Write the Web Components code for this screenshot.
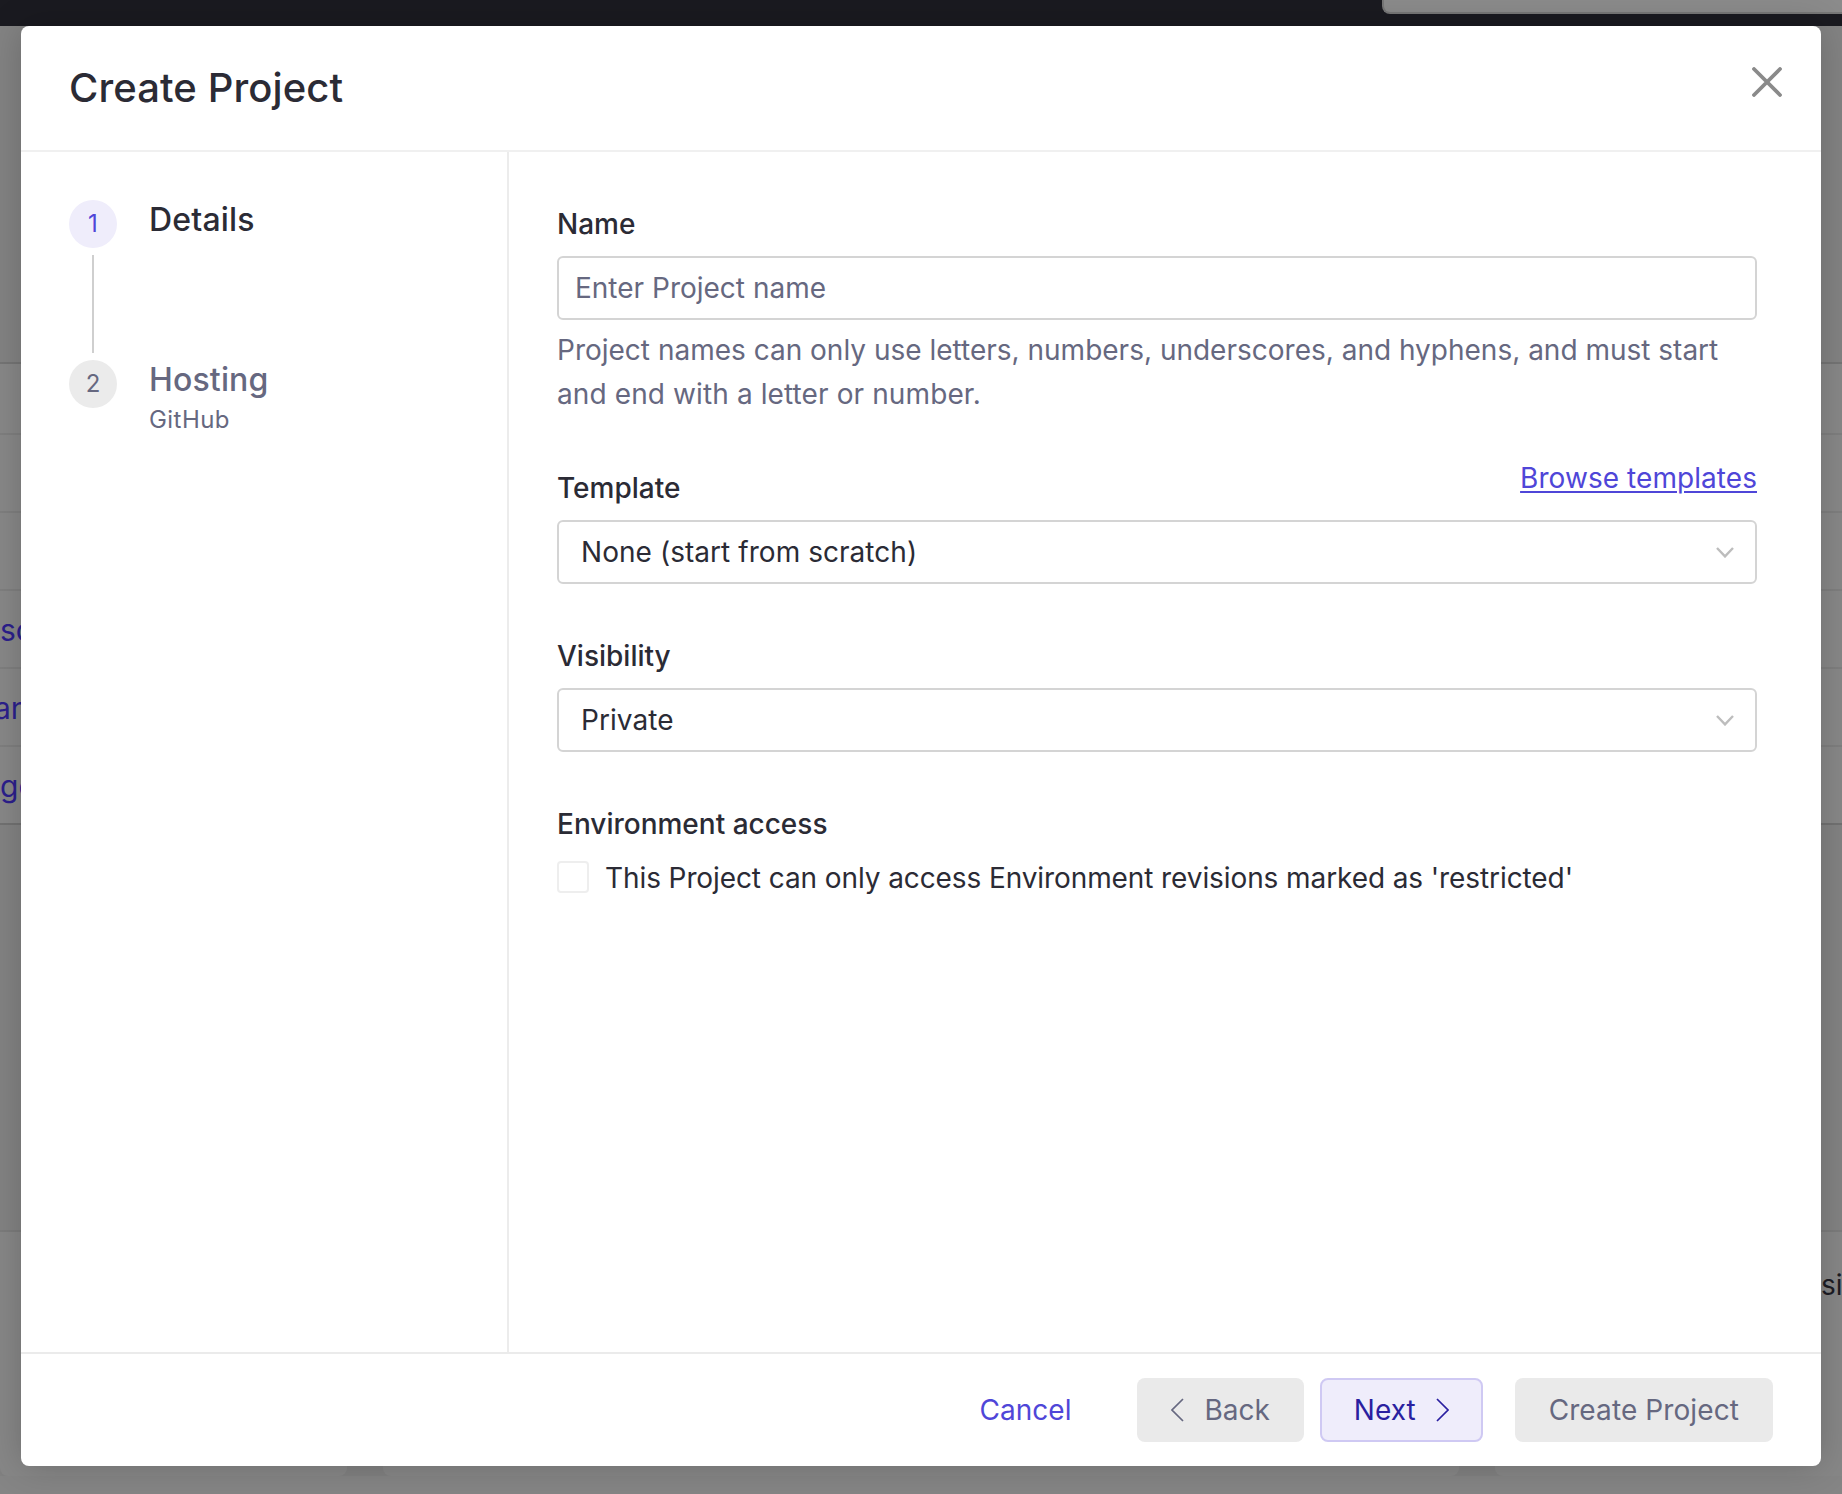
<!DOCTYPE html>
<html lang="en">
<head>
<meta charset="utf-8">
<title>Create Project</title>
<style>
  html, body { margin: 0; padding: 0; background: #878787; }
  body { font-family: Inter, "Liberation Sans", sans-serif; color: #2b2b35; }
  .tail { letter-spacing: .11px; }
</style>
</head>
<body>
<app-shell>
  <page-backdrop slot="page"></page-backdrop>
  <project-modal slot="modal" heading="Create Project">
    <step-list slot="steps">
      <step-item num="1" label="Details" state="active" connector></step-item>
      <step-item num="2" label="Hosting" sub="GitHub"></step-item>
    </step-list>

    <form-field label="Name">
      <text-box placeholder="Enter Project name"></text-box>
      <help-text>Project names can only use letters, numbers, underscores, and hyphens, and must start <span class="tail">and end with a letter or number.</span></help-text>
    </form-field>
    <form-field label="Template" action="Browse templates">
      <select-box value="None (start from scratch)"></select-box>
    </form-field>
    <form-field label="Visibility">
      <select-box value="Private"></select-box>
    </form-field>
    <form-field label="Environment access">
      <check-row>This Project can only access Environment revisions marked as 'restricted'</check-row>
    </form-field>

    <ui-button slot="footer" kind="link">Cancel</ui-button>
    <ui-button slot="footer" kind="muted" icon="left">Back</ui-button>
    <ui-button slot="footer" kind="primary" icon="right">Next</ui-button>
    <ui-button slot="footer" kind="muted" class="create">Create Project</ui-button>
  </project-modal>
</app-shell>

<script>
function define(name, css, html, extra) {
  const K = class extends HTMLElement {
    constructor() {
      super();
      const root = this.attachShadow({ mode: 'open' });
      const a = n => this.getAttribute(n) || '';
      root.innerHTML = '<style>' + css + '</style>' + (typeof html === 'function' ? html(a, this) : html);
    }
  };
  customElements.define(name, K);
}

define('app-shell', `
  :host { display:block; position:relative; width:1842px; height:1494px; overflow:hidden; background:#878787; }
  .modal { position:absolute; left:21px; top:26px; }
`, `<slot name="page"></slot><div class="modal"><slot name="modal"></slot></div>`);

define('page-backdrop', `
  :host { display:flex; flex-direction:column; height:1494px; font:400 30px/78px Inter, sans-serif; color:#2c1f8c; }
  .top { height:26px; flex:none; background:#1a1a20; display:flex; justify-content:flex-end; }
  .tab { width:458px; height:12px; background:#8b8b8b; border:solid #777; border-width:0 0 2px 2px; border-bottom-left-radius:8px; box-sizing:content-box; }
  .head { flex:none; background:#838383; border-bottom:2px solid #757575; box-sizing:border-box; height:338px; }
  .row { height:78px; flex:none; box-sizing:border-box; border-bottom:2px solid #7f7f7f; background:#888; white-space:nowrap; overflow:hidden; }
  .row.first { height:71px; }
  .row.last { border-bottom-color:#727272; }
  .rest { height:407px; flex:none; background:#838383; border-bottom:2px solid #7c7c7c; box-sizing:border-box; }
  .cards { flex:none; height:244px; display:flex; gap:36px; background:#818181; }
  .card { background:#878787; border-radius:0 0 8px 8px; flex:none; }
  .c1 { width:347px; } .c2 { width:1076px; } .c3 { flex:1; border-radius:0 0 0 8px; }
  .c3 { font:400 28px/44px Inter, sans-serif; color:#1c1c24; padding:31px 0 0 326px; box-sizing:border-box; white-space:nowrap; overflow:hidden; }
  .foot { flex:1; background:#858585; }
  .t { display:block; }
`, `
  <div class="top"><div class="tab"></div></div>
  <div class="head"></div>
  <div class="row first"></div>
  <div class="row"></div>
  <div class="row"></div>
  <div class="row"><span class="t">sc</span></div>
  <div class="row"><span class="t" style="text-indent:-6px">an</span></div>
  <div class="row last"><span class="t">ge</span></div>
  <div class="rest"></div>
  <div class="cards"><div class="card c1"></div><div class="card c2"></div><div class="card c3">sio</div></div>
  <div class="foot"></div>
`);

define('project-modal', `
  :host { display:flex; flex-direction:column; width:1800px; height:1440px; background:#fff; border-radius:8px; box-shadow:0 0 36px rgba(0,0,0,.2); overflow:hidden; }
  header { flex:none; height:126px; box-sizing:border-box; border-bottom:2px solid #f0f0f0; display:flex; align-items:center; justify-content:space-between; padding:0 39px 0 48px; }
  h1 { margin:0; font:500 40px/48px Inter, sans-serif; color:#2b2b35; letter-spacing:.1px; }
  .x { width:30px; height:30px; display:block; margin-bottom:12px; }
  .body { flex:1; display:flex; min-height:0; }
  aside { flex:none; width:488px; box-sizing:border-box; border-right:2px solid #ececec; padding:48px; }
  main { flex:1; box-sizing:border-box; padding:52px 64px 0 48px; display:flex; flex-direction:column; gap:52px; }
  footer { flex:none; height:114px; box-sizing:border-box; border-top:2px solid #ebebeb; display:flex; align-items:flex-start; justify-content:flex-end; padding:24px 48px 0 0; }
  ::slotted(.create) { margin-left:32px; letter-spacing:.1px; }
`, a => `
  <header>
    <h1>${a('heading')}</h1>
    <svg class="x" viewBox="0 0 30 30" fill="none" stroke="#8a8a8a" stroke-width="3.8" stroke-linecap="round"><path d="M2 2 28 28M28 2 2 28"/></svg>
  </header>
  <div class="body">
    <aside><slot name="steps"></slot></aside>
    <main><slot></slot></main>
  </div>
  <footer><slot name="footer"></slot></footer>
`);

define('step-list', `:host { display:flex; flex-direction:column; }`, `<slot></slot>`);

define('step-item', `
  :host { display:flex; gap:32px; height:160px; font-family:Inter, sans-serif; }
  .rail { width:48px; flex:none; display:flex; flex-direction:column; align-items:center; }
  .dot { width:48px; height:48px; flex:none; border-radius:50%; background:#ebebeb; color:#666880; display:flex; align-items:center; justify-content:center; font:400 24px/48px Inter, sans-serif; }
  .line { flex:1; width:2px; margin:7px 0; background:#cfcfcf; }
  .label { font:500 32px/40px Inter, sans-serif; color:#666880; letter-spacing:.15px; }
  .sub { font:400 24px/36px Inter, sans-serif; color:#666880; margin-top:2px; letter-spacing:.45px; }
  :host([state=active]) .dot { background:#efedfb; color:#4f46d8; }
  :host([state=active]) .label { color:#2b2b35; }
`, (a, el) => `
  <div class="rail"><div class="dot">${a('num')}</div>${el.hasAttribute('connector') ? '<div class="line"></div>' : ''}</div>
  <div><div class="label">${a('label')}</div>${a('sub') ? `<div class="sub">${a('sub')}</div>` : ''}</div>
`);

define('form-field', `
  :host { display:block; }
  .top { display:flex; justify-content:space-between; align-items:flex-start; margin-bottom:12px; }
  .label { font:500 28px/40px Inter, sans-serif; color:#2b2b35; }
  a { font:400 28px/20px Inter, sans-serif; color:#4f46d8; text-decoration:underline; text-decoration-thickness:2px; text-underline-offset:3px; letter-spacing:.06px; }
`, a => `
  <div class="top"><div class="label">${a('label')}</div>${a('action') ? `<a href="#">${a('action')}</a>` : ''}</div>
  <slot></slot>
`);

define('text-box', `
  :host { display:flex; align-items:center; height:64px; box-sizing:border-box; border:2px solid #d4d4d4; border-radius:6px; padding:0 16px; font:400 28px/44px Inter, sans-serif; color:#666880; }
`, a => a('placeholder'));

define('help-text', `
  :host { display:block; margin-top:8px; font:400 28px/44px Inter, sans-serif; color:#666880; }
`, `<slot></slot>`);

define('select-box', `
  :host { display:flex; align-items:center; justify-content:space-between; height:64px; box-sizing:border-box; border:2px solid #d4d4d4; border-radius:6px; padding:0 21px 0 22px; font:400 28px/44px Inter, sans-serif; color:#2b2b35; }
  span { letter-spacing:.05px; }
  svg { display:block; width:18px; height:11px; }
`, a => `<span>${a('value')}</span><svg viewBox="0 0 18 11" fill="none" stroke="#bdbdbd" stroke-width="2.4"><path d="M1 1 9 9.4 17 1"/></svg>`);

define('check-row', `
  :host { display:flex; align-items:flex-start; gap:16px; font:400 28px/44px Inter, sans-serif; color:#2b2b35; letter-spacing:-.095px; }
  .box { width:32px; height:32px; box-sizing:border-box; flex:none; margin-top:5px; border:2px solid #eeeeee; border-radius:4px; background:#fff; }
`, `<div class="box"></div><div><slot></slot></div>`);

define('ui-button', `
  :host { display:inline-flex; align-items:center; gap:20px; height:64px; box-sizing:border-box; padding:0 32px; border:2px solid transparent; border-radius:8px; font:400 28px/44px Inter, sans-serif; white-space:nowrap; flex:none; margin-left:16px; }
  :host([kind=muted]) { background:#eaeaea; color:#666880; }
  :host([kind=link]) { color:#4f46d8; background:transparent; margin-right:16px; }
  :host([kind=primary]) { background:#efedfb; border-color:#cfc9f3; color:#2a1fa0; }
  svg { display:block; width:13px; height:24px; }
`, a => {
  const ic = d => `<svg viewBox="0 0 13 24" fill="none" stroke="currentColor" stroke-width="1.7"><path d="${d}"/></svg>`;
  const i = a('icon');
  return (i === 'left' ? ic('M12 1 1 12 12 23') : '') + '<slot></slot>' + (i === 'right' ? ic('M1 1 12 12 1 23') : '');
});
</script>
</body>
</html>
